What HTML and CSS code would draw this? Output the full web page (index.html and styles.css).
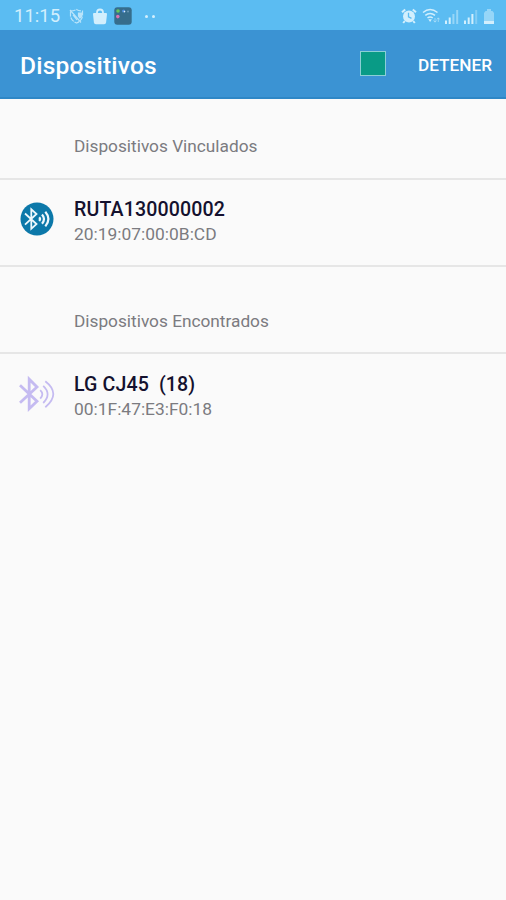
FILE: index.html
```html
<!DOCTYPE html>
<html lang="es">
<head>
<meta charset="utf-8">
<title>Dispositivos</title>
<link rel="stylesheet" href="styles.css">
</head>
<body>
<div class="status">
  <span class="clock">11:15</span>
  <svg class="i-shield" width="15" height="16" viewBox="0 0 15 16" fill="none" stroke="currentColor" stroke-width="1.2"><path d="M1.5 3 Q5 3 7.5 1.4 Q10 3 13.5 3 V8 Q13 12.5 7.5 15 Q2 12.5 1.5 8Z" stroke-dasharray="5 1"/><path d="M1 2 L12 14.5M4 7l4 5"/><path d="M9.5 5h3v3.5l-1.5 1.5-1.5-2z" fill="currentColor"/></svg>
  <svg class="i-bag" width="14" height="17" viewBox="0 0 14 17"><path d="M4 6V4.5a3 3 0 0 1 6 0V6" fill="none" stroke="currentColor" stroke-width="1.8"/><path d="M1 5h12q1 0 1 1l-.9 8.4a2 2 0 0 1-2 1.8H2.9a2 2 0 0 1-2-1.8L0 6q0-1 1-1z" fill="currentColor"/></svg>
  <svg class="i-app" width="18" height="18" viewBox="0 0 18 18"><rect x=".3" y=".3" width="17.4" height="17.4" rx="3" fill="#366d8c"/><circle cx="4" cy="4" r="1.8" fill="#65c85b"/><circle cx="9.6" cy="4" r="1.6" fill="#4e8fe0"/><circle cx="10.5" cy="4.6" r=".8" fill="#e4f1fb"/><circle cx="14" cy="4.5" r=".9" fill="#6f9bb9"/><circle cx="3.8" cy="9.6" r="1.8" fill="#dc73b0"/></svg>
  <span class="dots"><i></i><i></i></span>
  <div class="indicators">
    <svg width="16" height="16" viewBox="0 0 16 16"><circle cx="8" cy="8.4" r="6" fill="currentColor"/><path d="M1 4.2L4.2 1.4M15 4.2L11.8 1.4M3.8 13l-1.6 2M12.2 13l1.6 2" stroke="currentColor" stroke-width="2"/><path d="M7.5 4.8v4l3 1.5" fill="none" stroke="#5bbcf2" stroke-width="1.3"/></svg>
    <svg width="18" height="16" viewBox="0 0 18 16" fill="none" stroke="currentColor" stroke-width="1.5"><path d="M1 4.5Q8 -1.5 15.5 4.5M3.3 7.4Q8 3.6 13 7.4M5.5 10Q8 8 10.8 10"/><path d="M6.3 11.3h3.6L8.1 14z" fill="currentColor" stroke="none"/><path d="M13 10v4M11.5 12.5l1.5 1.7 1.5-1.7M16.3 14v-4M14.8 11.5l1.5-1.7 1.5 1.7" stroke-width=".8" opacity=".65"/></svg>
    <svg width="14" height="15" viewBox="0 0 14 15" fill="currentColor"><path d="M0 11.5h2V15H0zM3.7 8.5h2V15h-2z"/><path d="M7.4 5h2v10h-2zM11.2 1h2v14h-2z" opacity=".5"/></svg>
    <svg width="14" height="15" viewBox="0 0 14 15" fill="currentColor"><path d="M0 11.5h2V15H0zM3.7 8.5h2V15h-2zM7.4 5h2v10h-2z"/><path d="M11.2 1h2v14h-2z" opacity=".35"/></svg>
    <svg class="i-batt" width="10" height="15" viewBox="0 0 10 15" fill="currentColor"><path d="M3 0h4v2h1.5L10 4v8H0V4l1.5-2H3z" opacity=".5"/><path d="M0 12h10v3H0z"/></svg>
  </div>
</div>
<header class="appbar">
  <h1>Dispositivos</h1>
  <span class="stop-box"></span>
  <span class="stop">DETENER</span>
</header>
<main>
  <h2 class="section first">Dispositivos Vinculados</h2>
  <div class="device paired">
    <svg class="icon" width="38" height="38" viewBox="0 0 38 38" fill="none"><circle cx="19" cy="19" r="16.5" fill="#0c78a9"/><g stroke="#eef8fd" stroke-width="1.8"><path d="M7 13.5L18.5 24l-5.2 4.8V9.3L18.5 14 7 24.6"/><path d="M21.2 17.3q1.7 1.7 0 3.6M24 14.5q4 4.5 0 9.2M27.3 11.8q6.2 7.2 0 14.6" stroke-width="2.2"/></g></svg>
    <div><div class="name">RUTA130000002</div><div class="mac">20:19:07:00:0B:CD</div></div>
  </div>
  <h2 class="section second">Dispositivos Encontrados</h2>
  <div class="device found">
    <svg class="icon" width="38" height="38" viewBox="0 0 38 38" fill="none" stroke="#c5bbf1"><path d="M2 10.2L19 26.2 11.2 33.8V4.2L19 12 2 27.8" stroke-width="2.8"/><path d="M22.2 15.2q4.3 4 0 8.4M25.2 10.8q8.8 8.2 0 17.2M27.3 6.2q16 12.4 0 26" stroke-width="1.8"/></svg>
    <div><div class="name">LG CJ45&nbsp; (18)</div><div class="mac">00:1F:47:E3:F0:18</div></div>
  </div>
</main>
</body>
</html>
```
FILE: styles.css
```css
* { box-sizing: border-box; }
body {
  margin: 0;
  height: 900px;
  overflow: hidden;
  background: #fafafa;
  font-family: Roboto, "Liberation Sans", sans-serif;
}
svg { display: block; flex: none; }
.status {
  display: flex;
  align-items: center;
  height: 30px;
  padding: 2px 12px 0 14px;
  background: #5bbcf2;
  color: #d2effd;
}
.clock { width: 55px; font-size: 18.5px; line-height: 28px; }
.i-shield { opacity: .8; }
.i-bag { margin-left: 9px; }
.i-app { margin-left: 7px; }
.dots { display: flex; gap: 4px; margin-left: 13px; }
.dots i { width: 3px; height: 3px; border-radius: 50%; background: currentColor; }
.indicators { display: flex; align-items: center; gap: 5px; margin-left: auto; }
.i-batt { margin-left: 1px; }
.appbar {
  display: flex;
  align-items: center;
  height: 69px;
  padding: 0 14px 0 20px;
  background: #3b93d3;
  border-bottom: 2px solid #2e87c6;
  color: #fff;
}
h1 { margin: 4px auto 0 0; font-size: 24.6px; font-weight: 500; line-height: 30px; letter-spacing: .18px; }
.stop-box { width: 26px; height: 25px; margin-right: 32px; background: #099b86; border: 1px solid #8bcfd5; }
.stop { font-size: 17.2px; font-weight: 500; line-height: 24px; margin-top: 2px; }
.section {
  display: flex;
  align-items: center;
  margin: 0;
  padding-left: 74px;
  border-bottom: 2px solid #e6e6e6;
  color: #7b7b80;
  font-size: 17.25px;
  font-weight: 400;
}
.first { height: 81px; padding-top: 14px; }
.second { height: 87px; padding-top: 23px; }
.device { display: flex; align-items: flex-start; padding: 17px 0 0 18px; }
.paired { height: 87px; border-bottom: 2px solid #e6e6e6; }
.found { padding-top: 18px; }
.icon { margin: 3px 18px 0 0; }
.name { color: #14112e; font-size: 19.6px; font-weight: 500; line-height: 25px; letter-spacing: .12px; }
.mac { color: #7b7b80; font-size: 17.4px; line-height: 24px; }
```
